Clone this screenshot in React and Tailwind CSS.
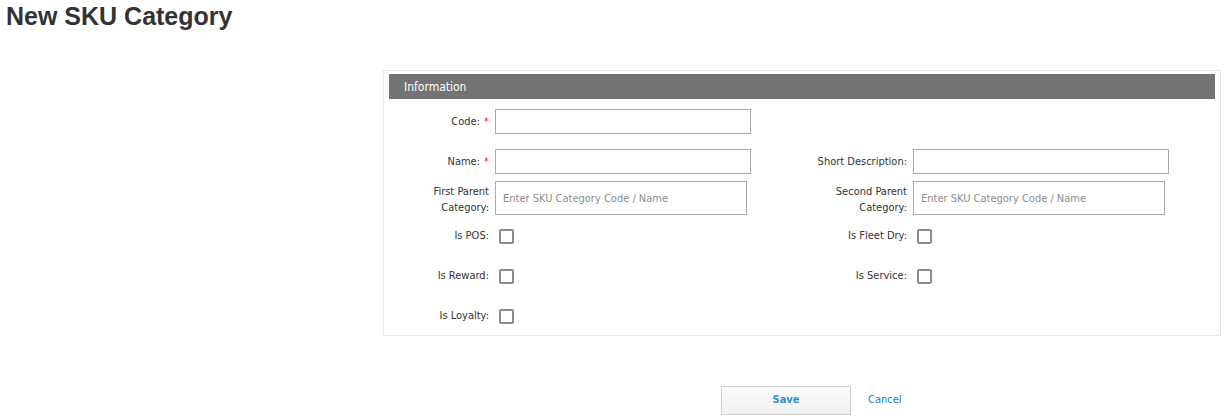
import React from 'react';

const font = { fontFamily: "'DejaVu Sans Condensed', 'Liberation Sans', sans-serif" };

const Label = ({ children, required, className = '' }) => (
    <div className={`shrink-0 text-right text-[11px] leading-[16px] text-[#333] ${className}`}>
        {children}
        {required && <span className="text-[#e3262b] ml-[4px]">*</span>}
    </div>
);

const TextInput = ({ placeholder, tall }) => (
    <input
        type="text"
        placeholder={placeholder}
        className={`border border-[#a9a9a9] bg-white px-[7px] text-[11px] text-[#333] placeholder:text-[#8c8c8c] outline-none ${tall ? 'w-[252px] h-[34px]' : 'w-[256px] h-[25px]'}`}
    />
);

const Check = () => (
    <div className="w-[15px] h-[15px] rounded-[2px] border-2 border-[#8d8b96] bg-white ml-[4px]" />
);

const Half = ({ children, align = 'items-center' }) => (
    <div className={`flex ${align} flex-1`}>{children}</div>
);

export default function App() {
    return (
        <div className="w-[1226px] h-[419px] bg-white" style={font}>
            <h1
                className="pl-[6px] pt-[1px] text-[25px] leading-[30px] font-bold text-[#333]"
                style={{ fontFamily: "'Liberation Sans', Arial, sans-serif" }}
            >
                New SKU Category
            </h1>

            <div className="ml-[383px] mt-[39px] w-[838px] border border-[#e6e6e2] px-[5px] pt-[3px] pb-[6px]">
                {/* Header */}
                <div className="h-[25px] bg-[#737373] pl-[15px] flex items-center text-white text-[12px]">
                    Information
                </div>

                <div className="flex flex-col">
                    {/* Code */}
                    <div className="flex items-center mt-[10px]">
                        <Half>
                            <Label required className="w-[100px] mr-[6px]">Code:</Label>
                            <TextInput />
                        </Half>
                        <Half />
                    </div>

                    {/* Name / Short Description */}
                    <div className="flex items-center mt-[15px]">
                        <Half>
                            <Label required className="w-[100px] mr-[6px]">Name:</Label>
                            <TextInput />
                        </Half>
                        <Half>
                            <Label className="w-[105px] mr-[6px]">Short Description:</Label>
                            <TextInput />
                        </Half>
                    </div>

                    {/* Parent categories */}
                    <div className="flex mt-[7px]">
                        <Half align="items-end">
                            <Label className="w-[100px] mr-[6px] mb-[-1px]">First Parent<br />Category:</Label>
                            <TextInput tall placeholder="Enter SKU Category Code / Name" />
                        </Half>
                        <Half align="items-end">
                            <Label className="w-[105px] mr-[6px] mb-[-1px]">Second Parent<br />Category:</Label>
                            <TextInput tall placeholder="Enter SKU Category Code / Name" />
                        </Half>
                    </div>

                    {/* Flags */}
                    <div className="flex items-center h-[24px] mt-[9px]">
                        <Half>
                            <Label className="w-[100px] mr-[6px]">Is POS:</Label>
                            <Check />
                        </Half>
                        <Half>
                            <Label className="w-[105px] mr-[6px]">Is Fleet Dry:</Label>
                            <Check />
                        </Half>
                    </div>
                    <div className="flex items-center h-[24px] mt-[16px]">
                        <Half>
                            <Label className="w-[100px] mr-[6px]">Is Reward:</Label>
                            <Check />
                        </Half>
                        <Half>
                            <Label className="w-[105px] mr-[6px]">Is Service:</Label>
                            <Check />
                        </Half>
                    </div>
                    <div className="flex items-center h-[24px] mt-[16px] mb-[1px]">
                        <Half>
                            <Label className="w-[100px] mr-[6px]">Is Loyalty:</Label>
                            <Check />
                        </Half>
                        <Half />
                    </div>
                </div>
            </div>

            {/* Actions */}
            <div className="flex items-center ml-[721px] mt-[50px]">
                <button className="w-[130px] h-[29px] border border-[#cfcfcf] bg-gradient-to-b from-[#fbfbfb] to-[#f0f0f0] text-[11px] font-semibold text-[#2a8fd4]">
                    Save
                </button>
                <a className="ml-[17px] text-[11px] text-[#1f7bc4] cursor-pointer">Cancel</a>
            </div>
        </div>
    );
}
